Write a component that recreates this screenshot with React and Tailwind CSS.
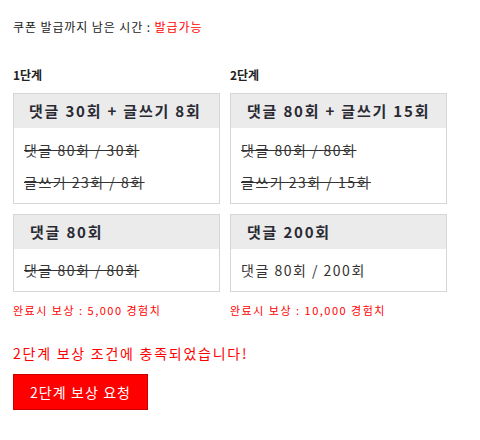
export default function App() {
  const font = { fontFamily: '"Noto Sans CJK KR", "Noto Sans", sans-serif' };
  return (
    <div className="bg-white w-[480px] h-[440px] pl-[13px] pt-[18px] text-[#333]" style={font}>
      <p className="text-[12px] leading-[18px] tracking-[0.9px] text-[#222]">
        쿠폰 발급까지 남은 시간 : <span className="text-[#ff0000]">발급가능</span>
      </p>

      <div className="mt-[31px] grid grid-cols-[207px_217px] gap-x-[10px]">
        {/* step 1 */}
        <div className="flex flex-col">
          <h3 className="text-[12px] font-bold leading-[16px] text-[#222]">1단계</h3>
          <div className="mt-[10px] border border-[#d6d6d6]">
            <div className="bg-[#ebebeb] h-[34px] pl-[15px] flex items-center text-[15px] font-bold tracking-[1.8px] text-[#2a2a33]">
              댓글 30회 + 글쓰기 8회
            </div>
            <div className="px-[10px] pt-[6px] pb-[5px] text-[14px] tracking-[1.5px] text-[#333]">
              <p className="leading-[32px] line-through">댓글 80회 / 30회</p>
              <p className="leading-[32px] line-through">글쓰기 23회 / 8회</p>
            </div>
          </div>
          <div className="mt-[10px] border border-[#d6d6d6]">
            <div className="bg-[#ebebeb] h-[34px] pl-[16px] flex items-center text-[15px] font-bold tracking-[1.8px] text-[#2a2a33]">
              댓글 80회
            </div>
            <div className="px-[10px] h-[42px] flex items-center text-[14px] tracking-[1.5px] text-[#333]">
              <p className="line-through">댓글 80회 / 80회</p>
            </div>
          </div>
          <p className="mt-[10px] text-[11px] leading-[16px] tracking-[1.5px] text-[#ff0000]">완료시 보상 : 5,000 경험치</p>
        </div>

        {/* step 2 */}
        <div className="flex flex-col">
          <h3 className="text-[12px] font-bold leading-[16px] text-[#222]">2단계</h3>
          <div className="mt-[10px] border border-[#d6d6d6]">
            <div className="bg-[#ebebeb] h-[34px] pl-[16px] flex items-center text-[15px] font-bold tracking-[1.8px] text-[#2a2a33]">
              댓글 80회 + 글쓰기 15회
            </div>
            <div className="px-[10px] pt-[6px] pb-[5px] text-[14px] tracking-[1.5px] text-[#333]">
              <p className="leading-[32px] line-through">댓글 80회 / 80회</p>
              <p className="leading-[32px] line-through">글쓰기 23회 / 15회</p>
            </div>
          </div>
          <div className="mt-[10px] border border-[#d6d6d6]">
            <div className="bg-[#ebebeb] h-[34px] pl-[16px] flex items-center text-[15px] font-bold tracking-[1.8px] text-[#2a2a33]">
              댓글 200회
            </div>
            <div className="px-[10px] h-[42px] flex items-center text-[14px] tracking-[1.5px] text-[#333]">
              <p>댓글 80회 / 200회</p>
            </div>
          </div>
          <p className="mt-[10px] text-[11px] leading-[16px] tracking-[1.5px] text-[#ff0000]">완료시 보상 : 10,000 경험치</p>
        </div>
      </div>

      <p className="mt-[25px] text-[14px] leading-[20px] tracking-[1.75px] text-[#ff0000]">2단계 보상 조건에 충족되었습니다!</p>
      <button
        type="button"
        className="mt-[11px] w-[135px] h-[36px] bg-[#ff0000] border border-[#cc0000] text-white text-[14px] tracking-[1.1px]"
        style={font}
      >
        2단계 보상 요청
      </button>
    </div>
  );
}
